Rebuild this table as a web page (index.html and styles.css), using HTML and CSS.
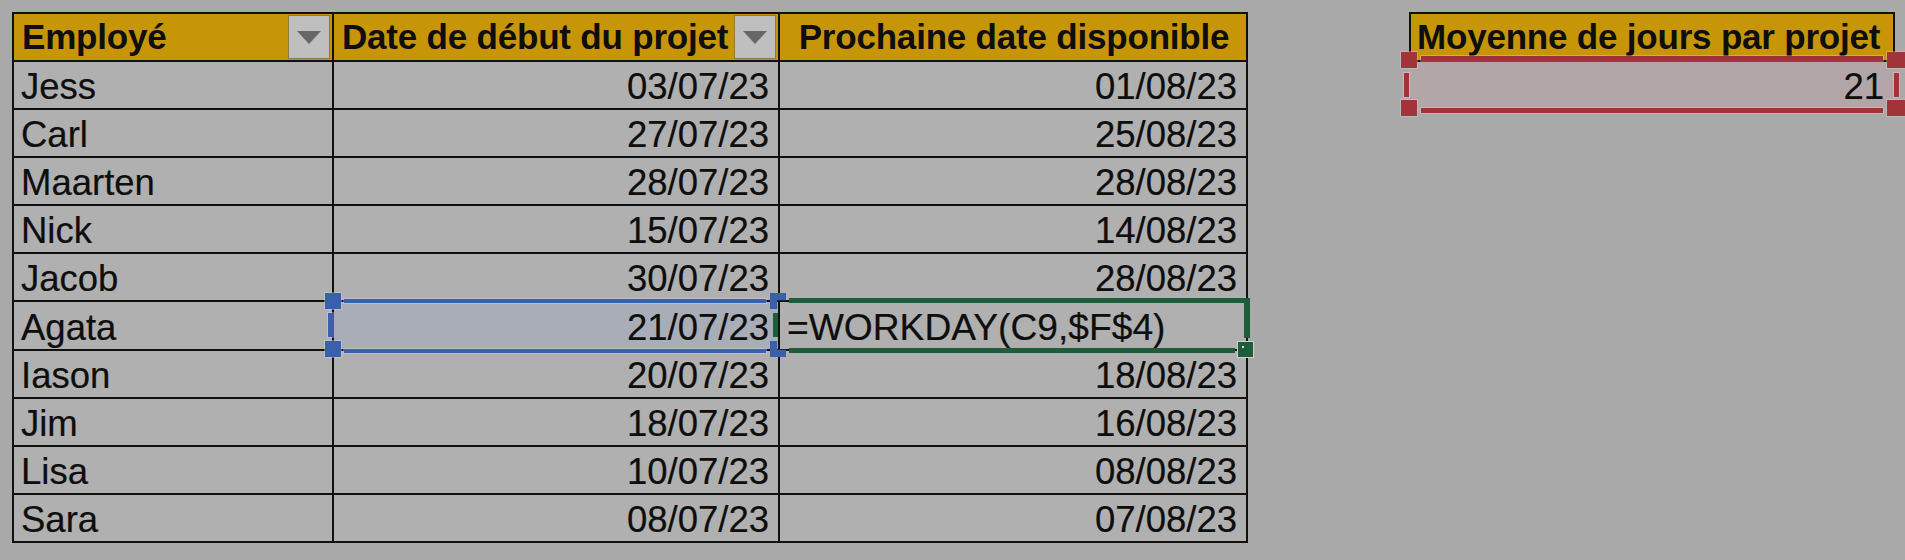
FILE: index.html
```html
<!DOCTYPE html>
<html lang="fr">
<head>
<meta charset="utf-8">
<title>Disponibilité des employés</title>
<link rel="stylesheet" href="styles.css">
</head>
<body>
<div class="screen">
  <table class="grid main">
    <colgroup><col class="c1"><col class="c2"><col class="c3"></colgroup>
    <thead>
      <tr>
        <th><div class="hcell"><span>Employé</span><span class="dd"><i></i></span></div></th>
        <th><div class="hcell"><span>Date de début du projet</span><span class="dd"><i></i></span></div></th>
        <th><div class="hcell center"><span>Prochaine date disponible</span></div></th>
      </tr>
    </thead>
    <tbody>
      <tr><td>Jess</td><td class="num">03/07/23</td><td class="num">01/08/23</td></tr>
      <tr><td>Carl</td><td class="num">27/07/23</td><td class="num">25/08/23</td></tr>
      <tr><td>Maarten</td><td class="num">28/07/23</td><td class="num">28/08/23</td></tr>
      <tr><td>Nick</td><td class="num">15/07/23</td><td class="num">14/08/23</td></tr>
      <tr><td>Jacob</td><td class="num">30/07/23</td><td class="num">28/08/23</td></tr>
      <tr><td>Agata</td><td class="num ref-blue">21/07/23</td><td class="formula">=WORKDAY(C9,$F$4)</td></tr>
      <tr><td>Iason</td><td class="num">20/07/23</td><td class="num">18/08/23</td></tr>
      <tr><td>Jim</td><td class="num">18/07/23</td><td class="num">16/08/23</td></tr>
      <tr><td>Lisa</td><td class="num">10/07/23</td><td class="num">08/08/23</td></tr>
      <tr><td>Sara</td><td class="num">08/07/23</td><td class="num">07/08/23</td></tr>
    </tbody>
  </table>

  <table class="grid side">
    <thead>
      <tr><th><div class="hcell"><span>Moyenne de jours par projet</span></div></th></tr>
    </thead>
    <tbody>
      <tr><td class="num ref-red">21</td></tr>
    </tbody>
  </table>

  <!-- blue reference range (C9) -->
  <div class="sel blue line b-top"></div>
  <div class="sel blue line b-bot"></div>
  <div class="sel blue handle b-tl"></div>
  <div class="sel blue handle b-bl"></div>
  <div class="sel blue bar b-left"></div>

  <!-- green active cell -->
  <div class="sel green line g-top"></div>
  <div class="sel green line g-right"></div>
  <div class="sel green line g-bot"></div>
  <div class="sel green bar g-left"></div>
  <div class="sel green fill-handle"><b></b></div>
  <div class="sel blue handle b-tr"></div>
  <div class="sel blue handle b-br"></div>

  <!-- red reference range ($F$4) -->
  <div class="sel red line r-top"></div>
  <div class="sel red line r-bot"></div>
  <div class="sel red handle r-tl"></div>
  <div class="sel red handle r-bl"></div>
  <div class="sel red handle r-tr"></div>
  <div class="sel red handle r-br"></div>
  <div class="sel red bar r-left"></div>
  <div class="sel red bar r-right"></div>
</div>
</body>
</html>
```

FILE: styles.css
```css
html, body {
  margin: 0;
  padding: 0;
  background: #a9a9a9;
  width: 1905px;
  height: 560px;
  overflow: hidden;
}

.screen {
  position: relative;
  display: flex;
  align-items: flex-start;
  gap: 161px;
  padding: 12px 0 0 12px;
  font-family: "Liberation Sans", Arial, sans-serif;
  color: #0e0e0e;
}

.grid {
  border-collapse: collapse;
  table-layout: fixed;
  background: #b0b0b0;
}

.grid th,
.grid td {
  border: 2px solid #101010;
  padding: 0;
  height: 48px;
  box-sizing: border-box;
  white-space: nowrap;
}

.main { width: 1234px; }
.main .c1 { width: 320px; }
.main .c2 { width: 446px; }
.main .c3 { width: 468px; }

.grid th {
  background: #c69608;
  font-weight: bold;
  font-size: 35px;
  text-align: left;
}

.hcell {
  display: flex;
  align-items: center;
  justify-content: space-between;
  height: 46px;
  padding: 0 2px 0 8px;
  letter-spacing: -0.2px;
}

.hcell.center {
  justify-content: center;
  padding: 0 0 0 2px;
}

.dd {
  display: flex;
  align-items: center;
  justify-content: center;
  width: 42px;
  height: 44px;
  background: #bfbfbf;
  border: 1px solid #8d7b3e;
  box-sizing: border-box;
  flex: none;
}

.dd i {
  display: block;
  width: 0;
  height: 0;
  border-left: 12px solid transparent;
  border-right: 12px solid transparent;
  border-top: 13px solid #676767;
}

.grid td {
  font-size: 36.5px;
  padding: 4px 0 0 7px;
  overflow: visible;
  -webkit-text-stroke: 0.2px #0e0e0e;
}

.grid td.num {
  text-align: right;
  padding: 4px 9px 0 0;
}

.grid td.formula {
  font-size: 37.2px;
  padding: 4px 0 0 7px;
  text-align: left;
}

.grid td.ref-blue {
  background: #a9adb8;
}

/* side table */
.side { width: 486px; }
.side th .hcell { padding: 0 0 0 6px; }
.side td.ref-red {
  background: #b3a6a9;
  border-left-color: transparent;
  border-right-color: transparent;
  border-bottom-color: transparent;
  padding-right: 9px;
}

/* selection overlays */
.sel { position: absolute; box-sizing: border-box; }
.blue { background: #3a60aa; box-shadow: 0 0 0 1px rgba(220,225,235,0.35); }
.green { background: #1f5c3c; }
.red { background: #a03438; box-shadow: 0 0 0 1px rgba(235,215,215,0.35); }

.handle { width: 16px; height: 16px; }
.bar { width: 5px; height: 24px; }

.b-top { left: 344px; top: 299px; width: 422px; height: 4px; }
.b-bot { left: 344px; top: 349px; width: 422px; height: 4px; }
.b-tl { left: 325px; top: 293px; }
.b-bl { left: 325px; top: 341px; }
.b-left { left: 328px; top: 313px; }
.b-tr { left: 770px; top: 293px; clip-path: polygon(0 0, 100% 0, 100% 45%, 45% 45%, 45% 100%, 0 100%); }
.b-br { left: 770px; top: 341px; clip-path: polygon(0 0, 45% 0, 45% 55%, 100% 55%, 100% 100%, 0 100%); }

.g-top { left: 789px; top: 298px; width: 461px; height: 5px; }
.g-right { left: 1244px; top: 298px; width: 6px; height: 40px; }
.g-bot { left: 789px; top: 348px; width: 446px; height: 5px; }
.g-left { left: 773px; top: 313px; }
.fill-handle {
  left: 1237px; top: 341px; width: 17px; height: 17px;
  border: 1px solid #c9d2cc;
}
.fill-handle b {
  position: absolute; left: 4px; top: 4px; width: 2px; height: 2px;
  background: #d8e0da;
}

.r-top { left: 1421px; top: 56px; width: 462px; height: 5px; }
.r-bot { left: 1421px; top: 108px; width: 462px; height: 5px; }
.r-tl { left: 1401px; top: 52px; }
.r-bl { left: 1401px; top: 100px; }
.r-tr { left: 1887px; top: 52px; width: 18px; }
.r-br { left: 1887px; top: 100px; width: 18px; }
.r-left { left: 1404px; top: 73px; }
.r-right { left: 1894px; top: 73px; }
```
